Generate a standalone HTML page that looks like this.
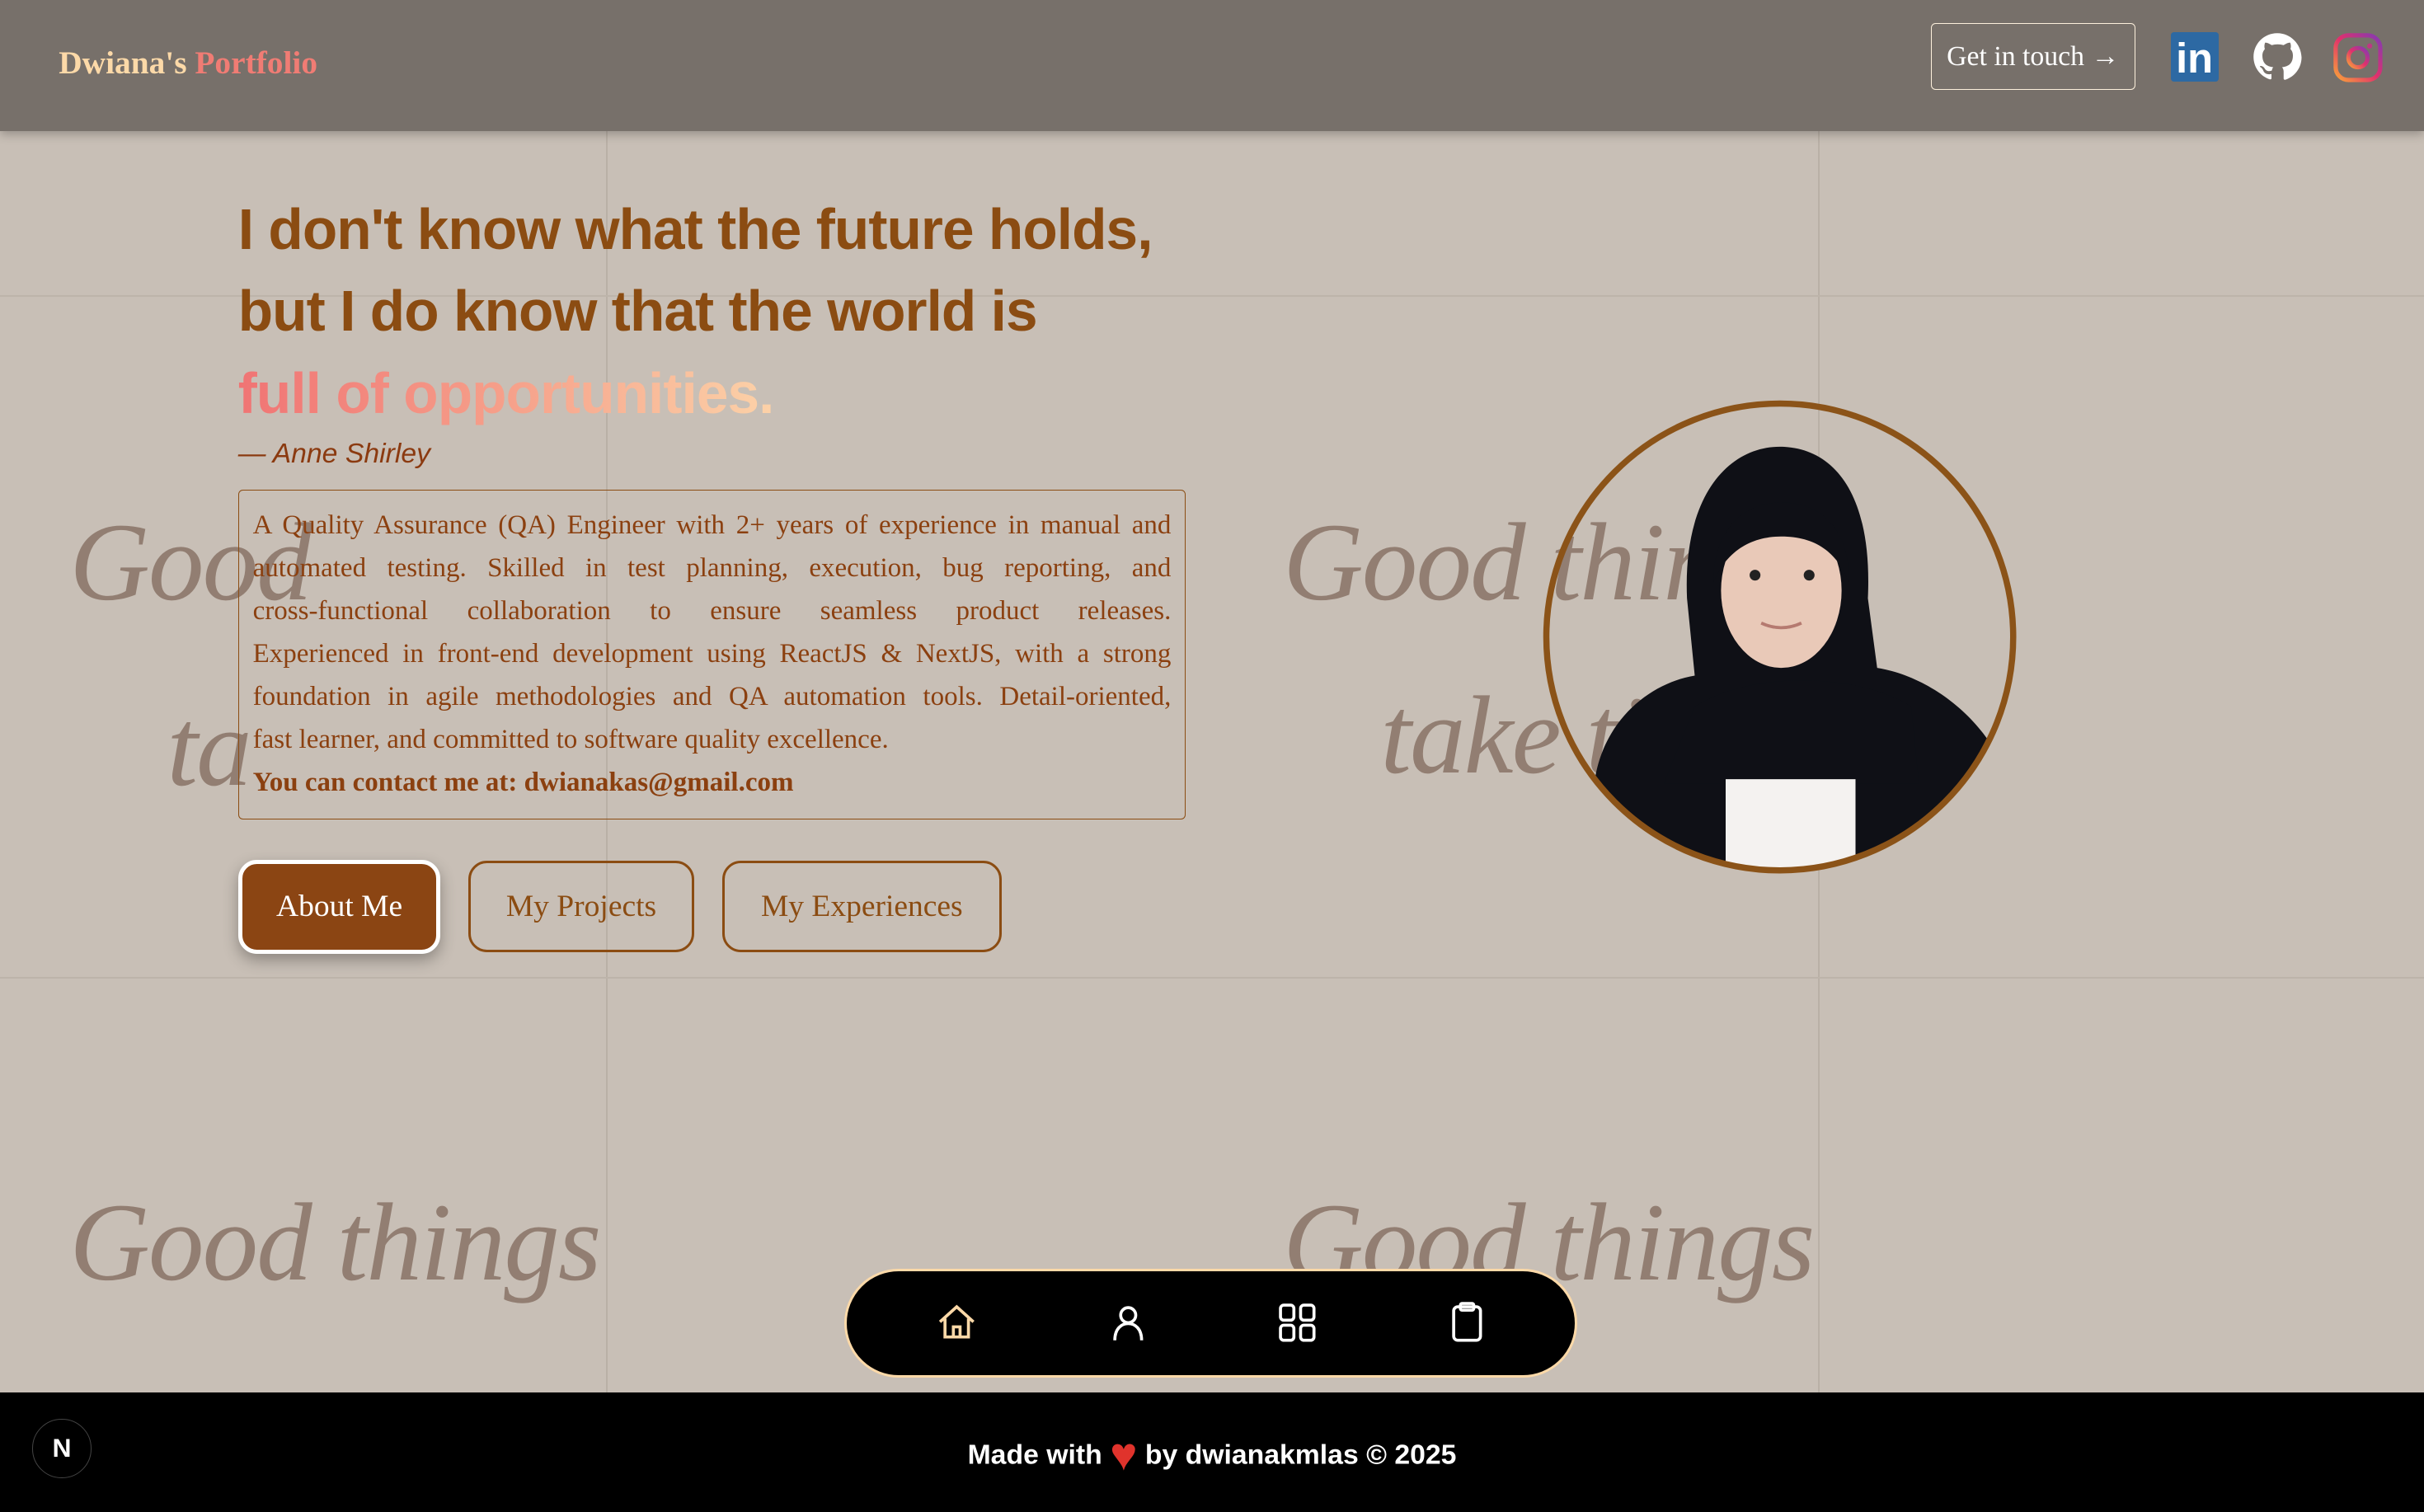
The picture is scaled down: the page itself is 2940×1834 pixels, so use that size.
<!DOCTYPE html>
<html><head><meta charset="utf-8"><style>
html,body{margin:0;padding:0}
body{width:1568px;height:978px;zoom:1.875;position:relative;overflow:hidden;background:#c8bfb6;font-family:"Liberation Sans",sans-serif}
.abs{position:absolute}
.vl{position:absolute;top:85px;width:1px;height:816px;background:#b9b0a6}
.hl{position:absolute;left:0;width:1568px;height:1px;background:#bdb4aa}
.script{position:absolute;font-family:"Liberation Serif",serif;font-style:italic;color:rgba(110,84,68,.6);font-size:72px;line-height:1;letter-spacing:-1px}
.hdr{left:0;top:0;width:1568px;height:85px;background:#77706a;box-shadow:0 2px 6px rgba(0,0,0,.25)}
h1{position:absolute;left:154px;top:122px;margin:0;font-size:37px;line-height:53px;font-weight:bold;color:#8b4c12;letter-spacing:-0.5px}
.box{position:absolute;left:154px;top:317px;width:594px;height:194px;border:1px solid #8b4c12;border-radius:3px;padding:9px;font-family:"Liberation Serif",serif;font-size:17.6px;line-height:27.7px;color:#8b4010;white-space:nowrap}
.box .j{text-align:justify;text-align-last:justify;height:27.7px}
.btn{position:absolute;top:557px;height:59px;border:2px solid #8b4c12;border-radius:12px;font-family:"Liberation Serif",serif;font-size:20px;color:#8b4c12;display:flex;align-items:center;justify-content:center;box-sizing:border-box}
</style></head><body>
<div class="vl" style="left:392px"></div><div class="vl" style="left:1176px"></div>
<div class="hl" style="top:191px"></div><div class="hl" style="top:632px"></div>
<div class="script" style="left:45px;top:328px">Good</div>
<div class="script" style="left:108px;top:448px">ta</div>
<div class="script" style="left:830px;top:328px">Good things</div>
<div class="script" style="left:893px;top:440px">take ti</div>
<div class="script" style="left:45px;top:768px">Good things</div>
<div class="script" style="left:830px;top:768px">Good things</div>

<div class="abs hdr"></div>
<div class="abs" style="left:38px;top:28px;font-family:'Liberation Serif',serif;font-weight:bold;font-size:21px;color:#fcd9a8">Dwiana's <span style="color:#f07c74">Portfolio</span></div>
<div class="abs" style="left:1249px;top:15px;width:131px;height:42px;border:1px solid #fdf0dc;border-radius:3px;color:#fff;font-family:'Liberation Serif',serif;font-size:18px;display:flex;align-items:center;justify-content:center">Get in touch →</div>
<div class="abs" style="left:1404px;top:21px;width:31px;height:32px;background:#2d69a3;border-radius:2px;color:#fff;font-weight:bold;font-size:27px;line-height:34px;text-align:center">in</div>
<svg class="abs" style="left:1457px;top:21px" width="32" height="32" viewBox="0 0 24 24"><path fill="#fff" d="M12 .5C5.6.5.5 5.6.5 12c0 5.1 3.3 9.4 7.9 10.9.6.1.8-.2.8-.6v-2c-3.2.7-3.9-1.5-3.9-1.5-.5-1.3-1.3-1.7-1.3-1.7-1-.7.1-.7.1-.7 1.2.1 1.8 1.2 1.8 1.2 1 1.8 2.8 1.3 3.5 1 .1-.8.4-1.3.7-1.6-2.6-.3-5.3-1.3-5.3-5.7 0-1.3.5-2.3 1.2-3.1-.1-.3-.5-1.5.1-3.1 0 0 1-.3 3.2 1.2a11 11 0 0 1 5.8 0c2.2-1.5 3.2-1.2 3.2-1.2.6 1.6.2 2.8.1 3.1.8.8 1.2 1.8 1.2 3.1 0 4.4-2.7 5.4-5.3 5.7.4.4.8 1.1.8 2.2v3.3c0 .3.2.7.8.6 4.6-1.5 7.9-5.8 7.9-10.9C23.5 5.6 18.4.5 12 .5z"/></svg>
<svg class="abs" style="left:1509px;top:21px" width="33" height="33" viewBox="0 0 24 24"><defs><linearGradient id="ig" x1="0" y1="1" x2="1" y2="0"><stop offset="0" stop-color="#f9a23a"/><stop offset=".5" stop-color="#e1306c"/><stop offset="1" stop-color="#833ab4"/></linearGradient></defs><rect x="1.5" y="1.5" width="21" height="21" rx="6" fill="none" stroke="url(#ig)" stroke-width="2"/><circle cx="12" cy="12" r="4.5" fill="none" stroke="url(#ig)" stroke-width="2"/><circle cx="17.5" cy="6.5" r="1.2" fill="#c13584"/></svg>

<h1>I don't know what the future holds,<br>but I do know that the world is<br><span style="background:linear-gradient(90deg,#f07474,#f6a08a 50%,#fcd2a8);-webkit-background-clip:text;color:transparent">full of opportunities.</span></h1>
<div class="abs" style="left:154px;top:283px;font-style:italic;font-size:18px;color:#8b3a10">— Anne Shirley</div>
<div class="box">
<div class="j">A Quality Assurance (QA) Engineer with 2+ years of experience in manual and</div>
<div class="j">automated testing. Skilled in test planning, execution, bug reporting, and</div>
<div class="j">cross-functional collaboration to ensure seamless product releases.</div>
<div class="j">Experienced in front-end development using ReactJS &amp; NextJS, with a strong</div>
<div class="j">foundation in agile methodologies and QA automation tools. Detail-oriented,</div>
<div>fast learner, and committed to software quality excellence.</div>
<div><b>You can contact me at: dwianakas@gmail.com</b></div>
</div>
<div class="btn" style="left:154px;width:131px;height:61px;top:556px;background:#8b4513;color:#fff;border:3px solid #fff;box-shadow:0 4px 10px rgba(0,0,0,.3)">About Me</div>
<div class="btn" style="left:303px;width:146px">My Projects</div>
<div class="btn" style="left:467px;width:181px">My Experiences</div>

<svg class="abs" style="left:996px;top:257px" width="310" height="310" viewBox="0 0 310 310">
<defs><clipPath id="cc"><circle cx="155" cy="155" r="151"/></clipPath></defs>
<g clip-path="url(#cc)">
<path d="M95 130 C92 60 125 30 158 32 C192 34 215 65 212 130 L218 175 C250 180 285 205 300 240 L290 320 L30 320 L35 250 C40 210 70 185 100 180 Z" fill="#0f1016"/>
<ellipse cx="156" cy="125" rx="39" ry="50" fill="#e9c9b8"/>
<path d="M112 120 C112 85 132 68 156 68 C182 68 200 85 200 120 C192 100 178 90 156 90 C136 90 120 100 112 120Z" fill="#0f1016"/>
<circle cx="139" cy="115" r="3.5" fill="#222"/><circle cx="174" cy="115" r="3.5" fill="#222"/>
<path d="M143 146 Q156 152 169 146" stroke="#b57a70" stroke-width="2" fill="none"/>
<path d="M100 200 C140 175 210 180 240 200 L245 250 L80 250Z" fill="#0f1016"/>
<rect x="120" y="247" width="84" height="70" fill="#f4f2f0"/>
</g>
<circle cx="155" cy="155" r="151" fill="none" stroke="#8b5318" stroke-width="4"/>
</svg>

<div class="abs" style="left:546px;top:821px;width:471px;height:67px;background:#000;border:2px solid #fcd9a8;border-radius:36px"></div>
<svg class="abs" style="left:606px;top:842px" width="26" height="26" viewBox="0 0 24 24" fill="none" stroke="#fcd9a8" stroke-width="1.8"><path d="M2 12 L12 3 L22 12 M5 10 V21 H19 V10 M10 21 V15 H14 V21"/></svg>
<svg class="abs" style="left:717px;top:842px" width="26" height="26" viewBox="0 0 24 24" fill="none" stroke="#fff" stroke-width="1.8"><circle cx="12" cy="8" r="4.5"/><path d="M4 23 C4 16 8 13 12 13 C16 13 20 16 20 23"/></svg>
<svg class="abs" style="left:826px;top:842px" width="26" height="26" viewBox="0 0 24 24" fill="none" stroke="#fff" stroke-width="1.8"><rect x="2" y="2" width="8" height="9" rx="2"/><rect x="14" y="2" width="8" height="9" rx="2"/><rect x="2" y="14" width="8" height="9" rx="2"/><rect x="14" y="14" width="8" height="9" rx="2"/></svg>
<svg class="abs" style="left:936px;top:842px" width="26" height="26" viewBox="0 0 24 24" fill="none" stroke="#fff" stroke-width="1.8"><rect x="4" y="3" width="16" height="20" rx="2.5"/><rect x="8" y="1" width="8" height="4" rx="1"/></svg>

<div class="abs" style="left:0;top:901px;width:1568px;height:77px;background:#000"></div>
<div class="abs" style="left:0;top:926px;width:1568px;text-align:center;color:#fff;font-size:18px;font-weight:bold">Made with <span style="color:#e0332c;font-size:30px;vertical-align:-4px;line-height:1">♥</span> by dwianakmlas © 2025</div>
<div class="abs" style="left:21px;top:918px;width:37px;height:37px;border-radius:50%;background:#000;border:1px solid #444;color:#fff;font-size:17px;font-weight:bold;text-align:center;line-height:37px">N</div>
</body></html>
